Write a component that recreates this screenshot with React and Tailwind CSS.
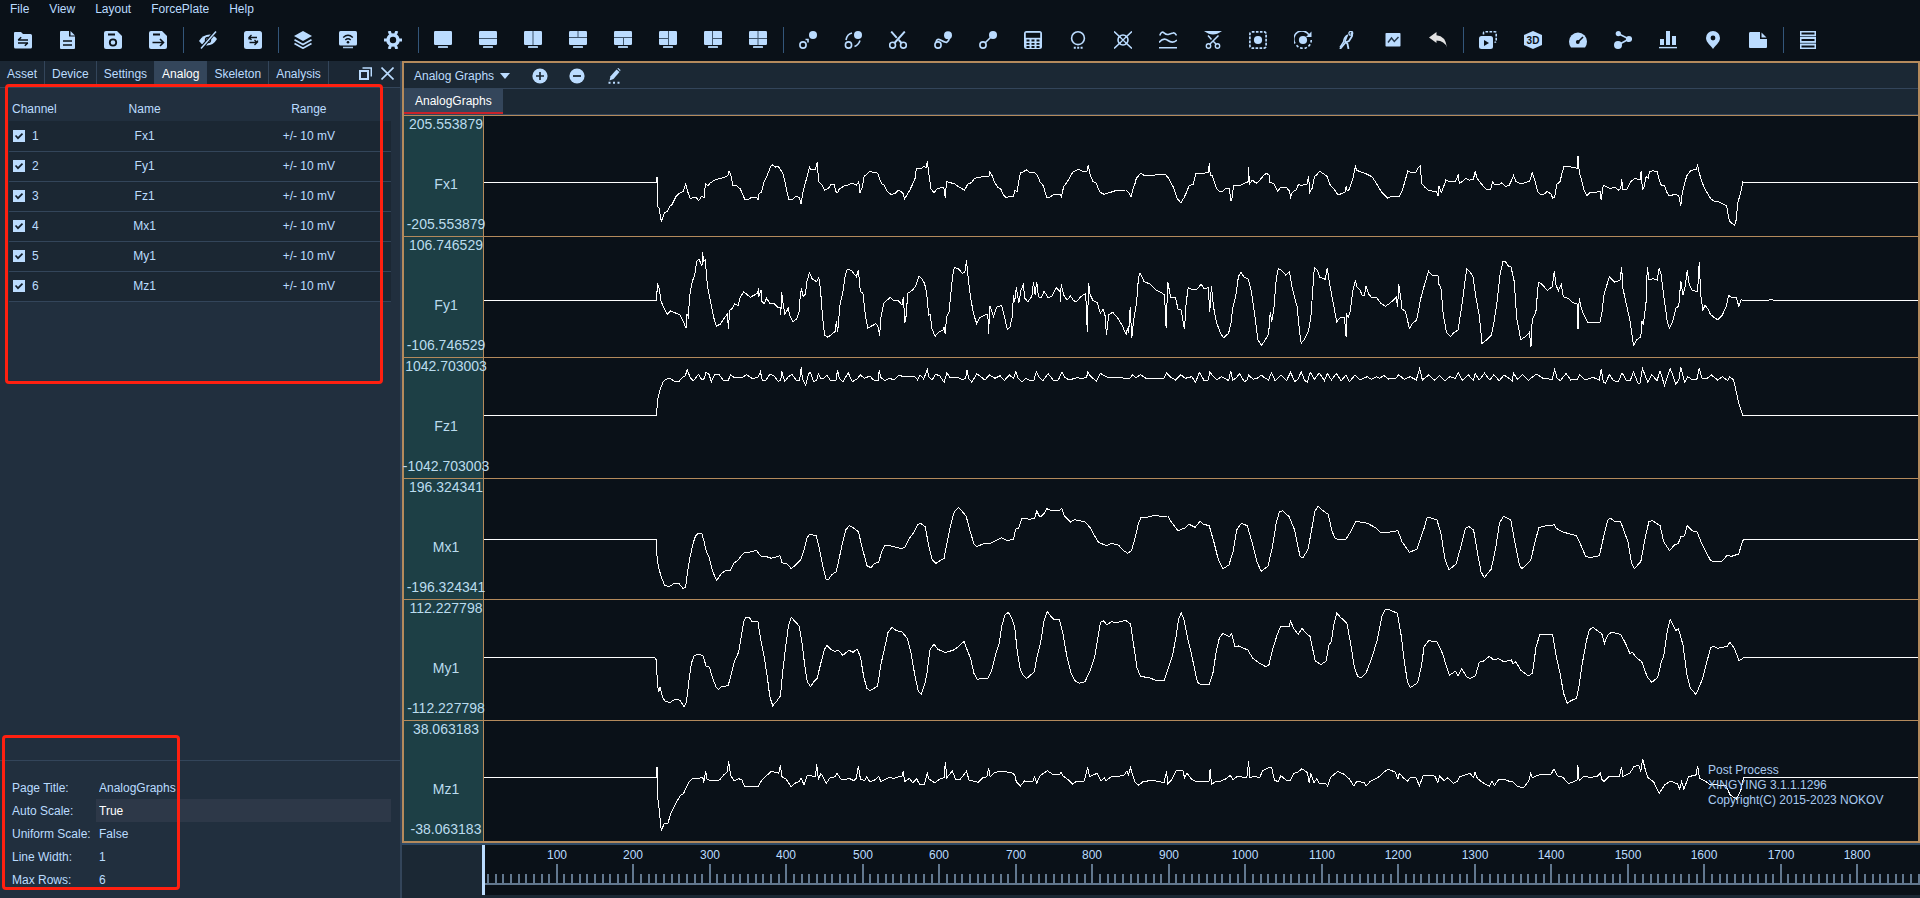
import React, { Fragment } from "react";

const INK = "#bbdcff";
const DARK = "#0a1118";

/* ---------- toolbar icons ---------- */

function Icon({ children, className = "" }) {
  return (
    <svg
      viewBox="0 0 18 18"
      className={"block h-[18px] w-[18px] shrink-0 " + className}
      fill="none"
      stroke={INK}
      strokeWidth="1.6"
      aria-hidden="true"
    >
      {children}
    </svg>
  );
}

function Screen({ d }) {
  return (
    <Icon>
      <rect x="0" y="0" width="18" height="14" rx="1.2" fill={INK} stroke="none" />
      {d && <path d={d} stroke="#3f556c" strokeWidth="1" />}
      <rect x="4" y="15" width="10" height="2" rx="0.5" fill="#a5c4e4" stroke="none" />
    </Icon>
  );
}

const TOOL_GROUPS = [
  [
    ["Open", <Icon><path d="M0 2Q0 1 1 1h6l2 2h7.5q1.500 0 1.500 1.500V16q0 1.500-1.500 1.500h-15Q0 17.500 0 16z" fill={INK} stroke="none" /><path d="M4 9h10M4.200 9l3-2.800M14 12H4M13.800 12l-3 2.800" stroke={DARK} strokeWidth="1.500" /></Icon>],
    ["Report", <Icon><path d="M1 1q0-1 1-1h8v5.500h6V17q0 1-1 1H2q-1 0-1-1z" fill={INK} stroke="none" /><path d="M11.500 0l4.500 4.500h-4.500z" fill={INK} stroke="none" /><path d="M4 10h9M4 14h9" stroke={DARK} strokeWidth="1.500" /></Icon>],
    ["Save", <Icon><path d="M0 2Q0 0 2 0h11l5 5v11q0 2-2 2H2q-2 0-2-2z" fill={INK} stroke="none" /><path d="M4 3.500h7" stroke={DARK} strokeWidth="2" /><circle cx="9" cy="11.500" r="3.200" stroke={DARK} strokeWidth="1.800" /></Icon>],
    ["Export", <Icon><path d="M0 2Q0 0 2 0h11l5 5v11q0 2-2 2H2q-2 0-2-2z" fill={INK} stroke="none" /><path d="M4 3.500h7" stroke={DARK} strokeWidth="2" /><path d="M3.500 11.500H14M11 8l3.500 3.500L11 15" stroke={DARK} strokeWidth="1.600" /></Icon>],
  ],
  [
    ["Hide", <Icon><path d="M0 10Q4 3 12 3.500L5.500 14.500Q2 13 0 10z" fill={INK} stroke="none" /><path d="M18 8Q14 15 7 14.500L14 4.500Q17 6 18 8z" fill={INK} stroke="none" /><circle cx="9" cy="9" r="2.600" stroke={DARK} strokeWidth="1.200" /><path d="M17 0L2 17.500" stroke={DARK} strokeWidth="3.500" /><path d="M17 .5L2 17.500" strokeWidth="1.500" /></Icon>],
    ["Swap", <Icon><rect width="18" height="18" rx="2.500" fill={INK} stroke="none" /><path d="M7.500 4L5 6.500l2.500 2.500M5 6.500h8M5 8.500V6.500M10.500 9l2.500 2.500L10.500 14M13 11.500H5.500M13.500 11.500V9.500" stroke={DARK} strokeWidth="1.300" /></Icon>],
  ],
  [
    ["Layers", <Icon><path d="M9 0l9 5-9 5-9-5z" fill={INK} stroke="none" /><path d="M.5 8.800L9 13.500l8.500-4.700M.5 12.500L9 17.200l8.500-4.700" strokeWidth="1.700" /></Icon>],
    ["Stream", <Icon><rect width="18" height="14.500" rx="1.500" fill={INK} stroke="none" /><path d="M4.200 6.500q4.800-4.500 9.600 0M6.300 9q2.700-2.500 5.400 0" stroke={DARK} strokeWidth="1.400" /><circle cx="9" cy="11.200" r="1.300" fill={DARK} stroke="none" /><path d="M4 16.500h10" strokeWidth="1.500" stroke="#a5c4e4" /></Icon>],
    ["Preferences", <Icon><circle cx="9" cy="9" r="5" strokeWidth="3.600" /><path d="M5.200 0L6.500 3.500M12.800 0L11.500 3.500M5.200 18L6.500 14.500M12.800 18l-1.300-3.500M0 9h3M15 9h3" strokeWidth="3" /><circle cx="9" cy="9" r="2.200" fill={DARK} stroke="none" /></Icon>],
  ],
  [
    ["Single view", <Screen />],
    ["Two rows", <Screen d="M0 7.500h18" />],
    ["Two columns", <Screen d="M9 0v14" />],
    ["Split top", <Screen d="M0 6.500h18M9 0v6.500" />],
    ["Split bottom", <Screen d="M0 6.500h18M9.500 6.500V14" />],
    ["Split left", <Screen d="M9.500 0v14M0 7.500h9" />],
    ["Split right", <Screen d="M8.500 0v14M8.500 7.500H18" />],
    ["Four views", <Screen d="M9 0v14M0 7.500h18" />],
  ],
  [
    ["Link", <Icon><circle cx="4" cy="14" r="3.100" /><circle cx="14" cy="4" r="4" fill={INK} stroke="none" /><path d="M6.500 8.500H9V11.500" /></Icon>],
    ["Exchange", <Icon><circle cx="4.500" cy="14" r="3.100" /><circle cx="14" cy="4" r="4" fill={INK} stroke="none" /><path d="M2 9Q3 3 8 2" /><path d="M10.500 15.500Q14.500 14 16 9.500" /></Icon>],
    ["Cut", <Icon><circle cx="3.600" cy="14.200" r="2.900" /><circle cx="14.400" cy="14.200" r="2.900" /><path d="M5.500 12L15.800 .5M12.500 12L9.800 9M7.800 6.800L2.200 .5" strokeWidth="1.900" /></Icon>],
    ["Smooth", <Icon><circle cx="4" cy="14" r="3.100" /><circle cx="14" cy="4.200" r="4" fill={INK} stroke="none" /><path d="M2 11Q3 7 6.500 9T12.500 11.500Q15 10 15.500 7" /></Icon>],
    ["Connect", <Icon><circle cx="4" cy="14" r="3.100" /><circle cx="14" cy="4" r="4" fill={INK} stroke="none" /><path d="M6 12L12 6" /></Icon>],
    ["Calculate", <Icon><rect width="18" height="18" rx="2.500" fill={INK} stroke="none" /><rect x="1.800" y="1.800" width="14.400" height="5" fill={DARK} stroke="none" /><path d="M2.500 9.500h3M7.500 9.500h3M12.500 9.500h3M2.500 12.800h3M7.500 12.800h3M12.500 12.800h3M2.500 16h3M7.500 16h3M12.500 16h3" stroke={DARK} strokeWidth="1.800" /></Icon>],
    ["Unlabelled", <Icon><circle cx="9" cy="7.200" r="6.400" /><path d="M4.800 16.800h2M8.200 16.800h2M11.600 16.800h2" strokeWidth="2" /></Icon>],
    ["Delete marker", <Icon><circle cx="9" cy="9" r="5" /><path d="M0 .5L6.500 6.500M18 .5L11.500 6.500M0 17.500L6.500 11.500M18 17.500L11.500 11.500" strokeWidth="1.600" /><path d="M5.500 5.500l7 7M12.500 5.500l-7 7" strokeWidth="1.300" /></Icon>],
    ["Filter", <Icon><path d="M.8 4.500Q2.500-.5 5 1.800T10 3.200T14 2Q16 1.500 17.500 4.500M0 11.500Q4.500 6 9 9.500T18 9M0 16.800h18" /></Icon>],
    ["Trim", <Icon><path d="M0 0h18Q13 3.500 9 3.500T0 0z" fill={INK} stroke="none" /><circle cx="4.500" cy="15" r="2.200" strokeWidth="1.400" /><circle cx="13.500" cy="15" r="2.200" strokeWidth="1.400" /><path d="M6 13l8.500-8.500M12 13l-3-3M7.500 8.500L4 4.500" strokeWidth="1.500" /></Icon>],
    ["Region", <Icon><rect x=".9" y=".9" width="16.200" height="16.200" rx="2" strokeDasharray="2.600 1.400" strokeWidth="1.700" /><circle cx="9" cy="9" r="4.100" fill={INK} stroke="none" /></Icon>],
    ["Rotate", <Icon><path d="M1 12.500A8.200 8.200 0 0 1 15 3.800" /><path d="M17.500 .5v5.500H12z" fill={INK} stroke="none" /><path d="M17.200 9A8.200 8.200 0 0 1 2.500 14.200" strokeDasharray="2.600 1.800" /><circle cx="9" cy="9" r="4.100" fill={INK} stroke="none" /></Icon>],
    ["Gait", <Icon><circle cx="11.800" cy="2.200" r="1.900" strokeWidth="1.300" /><path d="M12 1.500Q14 4 12.500 6L10 10l-3.500 1.500L1 18M8 4.500L6 10l2.500 3 1 5" strokeWidth="1.800" /><path d="M9 4Q5 6 4.500 11L1 16.500" strokeWidth="1.500" /></Icon>],
    ["Graph", <Icon><rect x="1.500" y="2" width="15" height="13.500" rx=".8" fill={INK} stroke="none" /><path d="M4 11.500L7.500 7l2.800 3.500L14.500 6" stroke="#22364a" strokeWidth="1.400" /></Icon>],
    ["Undo", <Icon><path d="M0 6.500L7.500 1v3.200Q16.500 4.800 18 16.500 15.500 10 7.500 9.600V12z" fill="#e2e2e2" stroke="none" /></Icon>],
  ],
  [
    ["Playback", <Icon><rect y="5" width="14" height="13" rx="2.500" fill={INK} stroke="none" /><path d="M5 9l5 3-5 3z" fill={DARK} stroke="none" /><path d="M4.500 3.500V2q0-1.200 1.200-1.200H16q1.200 0 1.200 1.200v8q0 1.200-1.700 1.200" strokeDasharray="2.600 1.400" /></Icon>],
    ["3D", <Icon><path d="M9 0l9 4v10l-9 4-9-4V4z" fill={INK} stroke="none" /><text x="9" y="13" textAnchor="middle" fill={DARK} stroke="none" fontSize="10" fontWeight="700" fontFamily="Liberation Sans, sans-serif">3D</text></Icon>],
    ["Gauge", <Icon><path d="M0 10.500a9 9 0 0 1 18 0q0 3.500-2 6H2q-2-2.500-2-6z" fill={INK} stroke="none" /><circle cx="8.800" cy="11" r="1.900" fill={DARK} stroke="none" /><path d="M9 11l5-5" stroke={DARK} strokeWidth="1.600" /></Icon>],
    ["Nodes", <Icon><path d="M4 2.500L15 8 4 14" /><circle cx="4.300" cy="2.600" r="2.600" fill={INK} stroke="none" /><circle cx="15" cy="8" r="3.100" fill={INK} stroke="none" /><circle cx="4" cy="14" r="4" fill={INK} stroke="none" /></Icon>],
    ["Bars", <Icon><path d="M1 8h4v6H1zM7 0h4v14H7zM13 5h4v9h-4z" fill={INK} stroke="none" /><path d="M0 16.600h18" strokeWidth="1.400" /></Icon>],
    ["Position", <Icon><path d="M9 0a7 7 0 0 1 7 7c0 4.500-5 7.500-7 11-2-3.500-7-6.500-7-11a7 7 0 0 1 7-7z" fill={INK} stroke="none" /><circle cx="9" cy="7" r="2.400" fill={DARK} stroke="none" /></Icon>],
    ["Note", <Icon><path d="M0 2.500Q0 1 1 1h10v7h7v8q0 1-1 1H1q-1 0-1-1z" fill={INK} stroke="none" /><path d="M12.500 1.500L17.500 6.500h-5z" fill={INK} stroke="none" /></Icon>],
  ],
  [
    ["Timeline rows", <Icon><path d="M1 0h16v18H1z" fill={INK} stroke="none" /><path d="M2.500 2.600h13M2.500 9h13M2.500 15.400h13" stroke={DARK} strokeWidth="2" /><path d="M1 5.500h16M1 12.300h16" stroke="#3f556c" strokeWidth="1" /></Icon>],
  ],
];

/* ---------- signal traces ---------- */

// Samples are kept on a fine grid: 3 units per pixel vertically, and
// `kx` units per pixel horizontally from pixel `x0` of the plot.
const CHANNELS = [
  {
    id: 1, name: "Fx1", max: "205.553879", min: "-205.553879", base: -1, zero: 202, kx: 2.45,
    left: "40,202 40,186 43,186 43,275 47,280 52,320 60,293 66,290 74,272 78,270 88,245 96,235 106,229 112,208 117,231 123,250 137,247 144,257 150,245 158,247 160,205 166,212 172,204 182,196 195,190 205,188 215,182 218,167 222,178 228,213 237,212 246,222 257,254 268,252 274,246 286,246 289,255 292,235 298,232 303,204 310,187 320,155 324,149 332,156 339,155 350,175 355,200 364,252 375,252 382,244 390,247 395,268 398,240 404,208 411,178 415,156 420,165 430,163 434,142 438,200 445,208 452,225 462,220 468,208 476,208 480,230 484,233 488,222 500,213 510,210 520,204 530,210 536,200 539,233 545,215 549,184 557,177 562,169 572,172 580,174 584,178 586,190 592,206 598,210 606,230 616,239 625,235 632,226 638,228 645,236 648,252 654,240 660,228 667,210 674,190 677,161 688,162 695,155 701,157 704,139 709,190 713,222 720,233 728,222 738,218 744,216 748,250 751,200 760,203 770,206 778,213 795,226 803,207 812,203 820,190 835,186 855,184 857,172 862,180 868,200 876,217 884,222 890,240 896,247 915,244 919,225 924,230 928,200 932,173 940,170 946,164 953,171 966,172 974,182 980,200 988,212 996,246 1005,246 1012,239 1030,238 1032,246 1038,215 1044,205 1052,190 1060,172 1075,163 1085,169 1096,168 1098,151 1103,180 1110,200 1117,203 1127,232 1137,238 1150,233 1165,227 1190,225 1198,233 1203,246 1207,224 1213,205 1216,190 1227,175 1235,181 1288,179 1295,190 1308,220 1316,250 1325,263 1332,250 1340,230 1345,212 1355,208 1362,176",
    right: "10,175 20,172 23,145 25,180 30,180 36,205 41,222 48,230 55,230 62,222 72,220 75,256 78,256 82,212 100,210 112,203 118,200 119,157 121,207 128,195 138,205 147,195 155,182 163,175 169,180 171,203 180,205 190,229 197,218 212,218 219,228 222,246 226,232 235,225 241,209 250,211 262,208 266,184 269,232 275,220 281,183 286,180 293,169 304,178 311,184 318,208 330,225 338,240 355,232 358,214 361,228 366,222 374,192 381,154 384,166 395,171 410,178 422,186 432,205 445,232 460,250 468,245 487,246 495,228 502,200 509,167 515,172 529,171 534,158 540,152 543,205 552,218 560,226 580,231 583,244 585,213 591,233 600,205 602,194 612,200 626,200 633,178 635,205 642,200 652,190 660,196 670,192 674,169 679,190 690,208 702,223 712,223 717,200 721,208 730,210 740,203 748,214 757,212 764,195 768,181 774,200 787,207 800,202 808,198 814,172 820,195 827,230 835,239 845,236 851,229 860,237 864,250 869,246 874,208 882,200 888,170 892,153 905,155 924,160 926,124 929,170 936,200 941,225 948,242 955,233 970,232 980,228 983,256 988,211 997,216 1005,221 1015,216 1025,225 1031,220 1033,193 1036,222 1046,222 1055,200 1066,190 1078,195 1081,168 1084,226 1088,215 1093,185 1098,190 1099,180 1102,170 1110,167 1120,170 1124,190 1130,210 1138,212 1143,230 1150,243 1163,238 1173,242 1178,274 1181,240 1187,205 1193,182 1203,166 1216,163 1219,151 1224,178 1232,208 1240,228 1252,252 1262,261 1270,260 1290,272 1297,318 1309,331 1313,320 1318,262 1325,230 1330,200 1332,202",
  },
  {
    id: 2, name: "Fy1", max: "106.746529", min: "-106.746529", base: -122, zero: 556, kx: 2.45,
    left: "40,556 43,508 46,515 52,560 60,583 67,598 75,587 85,593 98,600 105,617 113,640 115,597 118,605 122,540 128,500 134,480 139,440 144,432 152,452 153,412 156,438 160,434 165,510 172,555 180,605 187,634 197,627 205,612 214,598 217,643 219,587 226,580 232,567 240,572 246,545 254,531 262,538 270,547 288,535 290,520 291,545 297,525 299,560 305,566 310,550 318,565 328,565 338,577 343,576 345,600 347,532 351,570 355,598 363,580 368,605 374,620 384,612 390,590 393,535 396,524 400,545 405,538 409,500 415,473 422,492 433,500 438,487 442,520 447,600 452,660 460,667 470,658 479,648 481,617 484,652 490,570 497,530 503,480 508,463 518,466 530,485 535,466 540,530 546,535 552,600 558,640 566,634 578,626 584,637 587,664 590,610 597,565 606,555 613,547 620,556 632,556 642,570 645,547 649,620 651,617 656,535 666,527 675,515 683,484 690,490 697,505 702,530 707,600 711,598 715,640 723,664 732,652 743,645 745,635 748,658 751,605 757,590 762,530 766,480 770,458 780,461 790,475 796,472 800,436 804,490 810,550 818,600 825,626 832,608 845,600 852,597 854,658 857,572 862,590 866,605 874,577 886,571 892,600 900,643 906,638 912,605 915,540 918,560 922,517 928,563 934,523 939,510 943,550 950,560 960,545 964,502 968,540 972,500 976,545 983,548 990,529 1000,548 1010,543 1020,518 1030,530 1030,562 1032,508 1038,540 1046,555 1055,543 1062,557 1070,560 1080,545 1092,535 1096,650 1099,505 1103,540 1110,557 1120,562 1128,595 1134,583 1139,597 1143,660 1148,600 1158,592 1170,608 1182,633 1191,658 1194,640 1197,655 1201,575 1205,668 1210,610 1217,560 1221,490 1225,473 1235,500 1250,507 1262,523 1280,535 1285,540 1289,638 1293,500 1300,547 1312,547 1318,583 1326,585 1334,643 1338,565 1343,518 1355,525 1365,522",
    right: "3,508 10,522 20,518 24,590 28,513 33,575 40,620 50,655 58,668 70,655 76,625 80,580 88,540 94,485 100,472 108,487 118,492 126,530 134,600 142,675 151,691 158,678 168,658 172,592 176,620 181,580 187,490 192,460 200,467 210,480 219,470 226,520 238,575 244,650 248,685 256,673 266,648 272,600 280,458 288,467 293,487 307,493 312,458 318,510 328,575 335,620 345,607 354,607 358,667 360,600 363,607 368,590 374,530 381,496 384,515 392,525 398,542 403,540 407,512 413,537 420,547 433,548 443,565 454,574 466,564 481,547 484,577 487,508 493,560 495,582 503,588 513,640 521,625 531,615 541,550 551,505 560,469 569,481 583,482 585,508 590,515 596,600 604,652 614,664 623,652 632,645 638,600 645,540 650,490 654,462 662,472 669,486 675,540 684,600 691,685 700,677 714,660 719,630 728,560 735,480 742,440 748,439 754,452 762,456 770,500 776,610 786,674 797,665 807,652 811,695 814,615 823,590 829,502 838,508 851,526 863,515 868,468 872,510 878,527 885,508 890,545 902,550 912,562 924,567 926,643 929,550 934,580 940,598 950,622 980,621 985,590 990,538 997,510 1003,485 1016,502 1029,495 1033,455 1036,520 1045,570 1054,620 1062,691 1070,675 1080,665 1083,617 1086,630 1093,560 1096,455 1100,495 1110,491 1120,495 1125,458 1130,480 1137,550 1145,620 1150,640 1158,620 1166,580 1173,572 1178,497 1183,540 1188,520 1194,466 1198,505 1205,525 1213,528 1219,530 1223,442 1227,540 1232,587 1237,570 1245,583 1250,597 1260,608 1268,614 1280,600 1290,572 1295,541 1302,547 1314,547 1320,574 1326,554 1329,556 1394,556 1396,553 1402,553 1404,556",
  },
  {
    id: 3, name: "Fz1", max: "1042.703003", min: "-1042.703003", base: -243, zero: 901, kx: 2.45,
    left: "40,901 44,850 50,820 57,800 63,793 74,790 84,799 96,799 104,787 111,782 116,764 123,788 130,797 136,790 143,778 152,795 158,790 161,773 168,775 175,800 183,778 193,777 204,796 216,796 222,780 233,789 249,788 262,779 276,792 290,785 295,770 300,797 308,796 318,778 328,782 338,799 345,795 347,769 355,799 362,787 372,778 384,797 391,795 395,757 398,793 406,810 413,775 418,773 425,799 433,797 437,776 444,792 450,790 458,780 466,795 480,797 484,764 488,790 497,800 510,773 520,800 532,792 540,780 550,790 563,783 572,795 584,796 586,765 590,787 600,797 612,790 622,795 634,780 645,785 660,783 672,783 680,795 686,780 695,792 704,764 708,785 716,795 724,778 734,782 745,802 752,773 760,788 780,788 790,795 798,790 801,764 805,790 813,802 825,776 835,785 845,795 856,780 870,790 882,782 893,796 905,780 915,790 921,769 926,790 936,800 945,790 955,796 965,795 971,771 977,785 987,797 1000,776 1013,796 1025,795 1034,770 1040,787 1052,795 1070,788 1080,790 1094,788 1097,772 1103,782 1118,799 1128,775 1145,787 1200,790 1207,779 1215,788 1226,779 1240,790 1283,790 1290,774 1300,787 1312,795 1325,779 1336,790 1352,785 1361,802 1370,774",
    right: "0,773 10,797 20,795 24,772 32,783 42,795 52,785 60,790 70,797 75,767 80,795 88,790 97,776 108,799 115,797 119,780 130,793 140,790 150,780 160,790 168,795 175,773 184,797 198,780 212,797 222,772 232,800 240,792 248,771 257,797 263,802 270,771 280,793 292,774 305,797 312,775 322,795 334,775 346,797 358,780 366,800 380,780 392,795 410,785 420,793 432,785 440,790 450,781 462,792 480,790 487,779 500,793 515,785 530,795 538,761 545,795 560,780 575,796 587,781 600,797 612,785 625,790 633,773 643,796 657,779 670,797 674,775 684,795 697,775 710,795 720,779 733,797 745,780 765,797 768,775 778,793 790,779 805,797 812,788 825,777 840,790 863,793 869,764 875,790 883,797 897,775 908,795 925,793 930,779 943,795 962,787 978,795 983,762 988,800 993,805 1003,779 1013,797 1025,800 1034,773 1045,797 1054,797 1062,771 1073,805 1078,805 1084,760 1097,802 1107,779 1120,797 1127,767 1138,811 1152,760 1166,808 1173,795 1178,757 1187,802 1195,785 1205,793 1217,795 1223,760 1230,790 1240,792 1253,780 1268,795 1280,785 1293,797 1298,785 1307,795 1312,820 1320,865 1330,901",
  },
  {
    id: 4, name: "Mx1", max: "196.324341", min: "-196.324341", base: 1, zero: 178, kx: 2.178,
    left: "40,178 42,235 46,265 52,290 60,315 72,320 82,311 96,311 106,326 112,320 116,280 122,235 130,190 136,168 144,159 152,161 158,190 162,212 170,235 178,275 188,301 200,280 210,271 220,273 230,250 240,240 254,219 270,216 285,211 296,228 310,230 322,235 343,227 348,248 360,252 371,266 384,252 395,237 403,205 410,172 416,163 432,167 440,210 448,260 456,298 462,298 470,284 481,275 488,235 496,190 504,150 513,137 524,145 535,155 544,200 556,257 566,263 575,250 585,246 592,215 600,197 615,198 640,206 650,200 660,175 672,155 680,135 687,130 699,140 706,190 716,240 725,250 745,235 752,190 760,140 770,95 780,82 790,95 799,108 808,150 818,192 825,200 840,192 858,190 880,177 886,173 900,182 915,178 920,148 928,144 936,115 955,118 967,115 972,93 980,112 990,100 997,86 1010,93 1030,90 1033,85 1040,108 1055,126 1065,119 1090,125 1104,145 1115,170 1123,187 1143,197 1155,190 1172,195 1185,212 1195,220 1204,212 1214,170 1220,135 1227,113 1245,111 1260,106 1275,109 1293,108 1303,128 1318,152 1335,144 1345,133 1360,142",
    right: "0,124 8,133 20,137 30,185 40,240 50,266 63,255 72,215 80,150 90,130 103,137 112,180 124,245 133,274 148,258 158,200 166,130 173,95 180,92 194,110 206,150 212,190 218,230 224,233 235,210 243,150 250,95 257,79 268,92 279,103 288,155 294,175 300,178 318,178 328,155 340,124 365,130 382,143 394,159 420,155 431,152 440,185 456,217 473,207 480,175 488,145 494,114 502,113 516,120 524,155 534,240 542,269 558,252 568,200 578,145 586,140 596,150 604,215 612,275 619,293 634,268 644,205 652,130 661,109 677,119 686,190 696,257 701,266 720,242 728,195 738,143 752,138 768,137 771,131 776,145 790,156 820,167 830,197 840,229 850,233 870,227 880,165 888,120 894,115 905,126 916,125 932,185 940,250 946,266 960,245 970,170 978,124 986,122 1002,137 1010,185 1023,212 1033,195 1042,190 1047,170 1055,168 1061,137 1072,152 1083,156 1092,188 1112,242 1118,244 1137,244 1148,226 1158,229 1173,222 1182,182 1186,178",
  },
  {
    id: 5, name: "My1", max: "112.227798", min: "-112.227798", base: -120, zero: 532, kx: 2.178,
    left: "36,532 40,540 43,620 46,635 49,622 55,650 62,665 74,667 86,658 98,661 108,680 114,665 120,600 126,550 132,528 144,522 154,527 162,558 170,562 178,595 186,620 192,628 200,620 216,617 224,580 232,542 242,515 248,470 254,425 260,412 268,413 275,425 289,426 296,480 304,530 312,590 318,650 325,677 334,665 344,648 350,570 358,490 364,435 371,412 378,422 390,438 397,490 404,560 410,605 418,620 426,605 434,595 444,545 452,508 458,496 468,508 478,515 485,510 497,526 512,511 522,517 532,507 540,530 548,590 556,625 564,632 582,618 590,555 600,500 608,455 618,442 628,452 642,456 655,475 664,520 674,590 682,635 689,643 698,610 704,575 710,510 720,493 730,508 748,518 768,510 780,500 794,484 800,505 810,535 818,580 826,598 845,594 852,595 862,570 872,520 880,490 886,440 894,405 902,397 910,412 918,440 924,510 932,570 940,588 947,596 966,575 972,535 982,485 990,420 998,395 1006,408 1014,418 1027,418 1036,460 1046,530 1056,580 1066,602 1076,610 1090,605 1102,575 1114,530 1122,470 1128,427 1135,422 1144,434 1155,425 1168,428 1190,421 1202,432 1210,500 1218,565 1227,590 1245,592 1264,601 1284,601 1294,565 1304,530 1312,480 1320,415 1326,399 1332,415 1340,465 1350,515 1360,575 1366,607",
    right: "0,612 20,612 28,580 36,510 42,475 50,460 64,470 69,460 76,500 84,498 104,510 115,535 130,550 143,560 150,555 158,510 168,465 176,438 195,438 197,422 204,445 214,464 222,444 230,458 240,470 246,510 251,542 263,554 275,543 280,497 286,485 292,430 298,400 306,412 320,430 328,490 336,560 343,588 350,594 362,578 374,535 386,480 396,410 403,389 414,390 430,400 438,465 446,555 452,605 458,623 474,608 482,560 488,500 498,482 516,485 528,520 536,555 543,586 557,573 562,587 570,565 580,590 588,596 600,587 608,547 618,543 630,529 640,540 650,536 662,545 678,540 682,552 688,545 698,570 715,588 724,580 732,500 740,464 768,463 776,530 784,580 792,640 800,670 808,662 820,655 826,615 832,555 842,480 848,450 856,442 870,457 875,460 881,490 888,465 896,457 916,463 926,488 936,520 942,517 950,532 962,545 974,590 984,607 997,592 1005,545 1010,530 1018,450 1024,418 1036,452 1042,446 1052,495 1060,580 1068,625 1080,643 1086,625 1095,595 1104,545 1112,503 1118,498 1128,505 1148,499 1154,487 1164,505 1174,542 1186,532",
  },
  {
    id: 6, name: "Mz1", max: "38.063183", min: "-38.063183", base: -241, zero: 892, kx: 2.178,
    left: "40,892 41,862 43,862 43,950 47,990 52,1051 60,1030 68,1030 76,1000 88,970 98,948 107,940 112,925 120,907 128,896 154,893 156,910 161,874 164,897 172,902 195,900 205,885 214,875 217,844 222,885 230,902 242,896 250,900 256,920 275,918 290,918 300,898 312,885 322,874 340,880 344,856 348,890 358,897 370,920 382,908 390,905 395,895 402,915 410,885 430,890 433,853 437,900 443,880 447,888 456,910 466,893 478,890 483,880 492,897 502,900 512,895 524,902 530,895 535,858 540,897 550,902 555,890 563,905 575,900 585,888 590,905 610,893 622,895 642,888 645,872 648,905 660,895 668,908 678,897 686,915 697,912 704,880 708,897 722,908 735,897 745,893 748,847 752,893 765,873 773,897 785,897 800,874 806,900 828,907 840,893 850,890 854,865 858,890 870,877 890,874 912,879 918,885 922,905 932,918 942,903 962,905 967,890 972,910 980,887 998,872 1010,882 1028,885 1032,877 1036,887 1050,900 1060,912 1070,903 1088,903 1097,862 1101,890 1120,880 1130,903 1138,893 1142,902 1155,890 1185,887 1193,873 1197,885 1202,862 1206,880 1212,905 1222,916 1232,905 1255,901 1284,908 1290,874 1293,912 1302,900 1314,872 1330,872 1334,893 1340,880 1352,898 1362,904",
    right: "0,903 15,904 20,903 22,866 25,913 35,904 45,903 55,898 66,886 72,900 80,890 102,892 106,844 108,893 118,889 130,893 136,873 150,862 156,862 162,900 170,905 176,887 190,903 196,902 204,880 212,878 222,866 234,878 238,910 241,880 248,908 254,897 260,910 274,911 278,918 284,893 300,874 314,883 326,898 335,918 342,903 358,908 362,918 370,905 390,890 402,875 410,868 425,876 431,897 434,880 444,895 452,903 458,893 470,893 478,917 486,887 505,885 512,890 518,907 522,888 532,902 540,893 552,910 560,905 566,890 588,880 596,893 599,877 604,895 616,908 630,918 636,903 641,917 650,900 660,897 672,903 680,903 692,920 705,923 716,903 720,880 724,893 738,885 764,884 771,866 778,887 790,892 803,911 822,900 823,856 826,903 836,888 850,893 866,888 872,880 875,898 880,905 890,890 914,888 918,860 921,890 936,880 945,860 956,856 960,875 964,836 970,870 976,893 988,905 1000,940 1012,915 1024,903 1040,912 1045,928 1049,905 1054,928 1064,890 1080,885 1084,857 1088,895 1100,903 1110,913 1145,917 1155,945 1168,957 1178,930 1184,892",
  },
];

function tracePoints({ left, right, base, zero, kx }) {
  const place = (pts, x0, k) =>
    pts.split(" ").map((p) => {
      const [x, y] = p.split(",").map(Number);
      return `${(x0 + x / k).toFixed(1)},${(y / 3 + base).toFixed(1)}`;
    });
  const y0 = (zero / 3 + base).toFixed(1);
  return [`0,${y0}`, ...place(left, 156, 2.45), ...place(right, 716, kx), `4000,${y0}`].join(" ");
}

function ChannelRow({ channel, children }) {
  return (
    <section className="relative flex border-t border-[#b48a5c]" aria-label={channel.name}>
      <div className="relative z-10 flex h-[120px] w-[79px] shrink-0 flex-col items-center bg-[#1d3f45] pb-1 pl-[5px] text-[14px] leading-4 whitespace-nowrap text-[#bbdcee]">
        <span>{channel.max}</span>
        <span className="mt-auto">{channel.name}</span>
        <span className="mt-6">{channel.min}</span>
      </div>
      <svg className="block h-[120px] min-w-0 flex-1 border-l border-[#b48a5c]" role="img" aria-label={channel.name + " signal"}>
        <polyline points={tracePoints(channel)} fill="none" stroke="#fff" strokeWidth="1" shapeRendering="crispEdges" />
      </svg>
      {children}
    </section>
  );
}

/* ---------- timeline ---------- */

const frameX = (f) => Math.round(f * 0.765 - 4.7);

function Timeline() {
  const ticks = Array.from({ length: 188 }, (_, i) => (i + 1) * 10);
  return (
    <div className="flex border-t-2 border-[#2f4a66] bg-[#1b2834] pb-[3px]">
      <div className="w-[80px] shrink-0" />
      <div className="h-[50px] w-[3px] shrink-0 bg-[#bbdcff]" />
      <svg className="block h-[50px] min-w-0 flex-1 bg-[#0a1118]" role="img" aria-label="Frames">
        <g fill="#62788f" shapeRendering="crispEdges">
          {ticks.map((f) => (
            <rect key={f} x={frameX(f) - 1} y={f % 100 ? 29 : 19} width="2" height={f % 100 ? 9 : 19} />
          ))}
          <rect x="0" y="38" width="4000" height="2" />
        </g>
        <g fill={INK} fontSize="12" textAnchor="middle">
          {ticks.filter((f) => f % 100 === 0).map((f) => (
            <text key={f} x={frameX(f)} y="14">{f}</text>
          ))}
        </g>
      </svg>
    </div>
  );
}

/* ---------- side panel ---------- */

const TABS = ["Asset", "Device", "Settings", "Analog", "Skeleton", "Analysis"];

function ChannelTable() {
  return (
    <div className="px-[9px] pt-[9px]">
      <table className="w-full table-fixed border-collapse text-center">
        <colgroup>
          <col className="w-[14%]" />
          <col className="w-[43%]" />
          <col className="w-[43%]" />
        </colgroup>
        <thead>
          <tr className="h-6">
            <th className="p-0 pl-[3px] text-left font-normal">Channel</th>
            <th className="p-0 font-normal">Name</th>
            <th className="p-0 font-normal">Range</th>
          </tr>
        </thead>
        <tbody className="bg-[#1b2733]">
          {CHANNELS.map((c) => (
            <tr key={c.id} className="h-[30px] border-b border-[#33455a]">
              <td className="p-0 pl-1">
                <label className="flex items-center gap-[7px]">
                  <span className="relative block h-3 w-3">
                    <input type="checkbox" defaultChecked className="peer block h-3 w-3 appearance-none bg-[#bbdcff]" />
                    <svg viewBox="0 0 12 12" className="pointer-events-none absolute inset-0 hidden h-3 w-3 peer-checked:block">
                      <path d="M2.500 5.500L5 8.200 9.500 3.700" fill="none" stroke="#14202c" strokeWidth="1.700" />
                    </svg>
                  </span>
                  {c.id}
                </label>
              </td>
              <td className="p-0">{c.name}</td>
              <td className="p-0">+/- 10 mV</td>
            </tr>
          ))}
        </tbody>
      </table>
    </div>
  );
}

function PropertyRow({ id, label, children }) {
  return (
    <div className="flex h-[23px] items-stretch pr-[9px] pl-3">
      <label htmlFor={id} className="flex w-[84px] shrink-0 items-center whitespace-nowrap">{label}</label>
      {children}
    </div>
  );
}

const FIELD = "h-[23px] min-w-0 flex-1 appearance-none bg-transparent px-[3px] outline-none";

function SidePanel() {
  return (
    <aside className="relative flex w-[400px] shrink-0 flex-col bg-[#212f3e]">
      <div className="flex h-[27px] shrink-0 border-b border-[#33455a] bg-[#1b2734]" role="tablist">
        {TABS.map((t) => (
          <button
            key={t}
            role="tab"
            aria-selected={t === "Analog"}
            className={
              "h-[25px] border-r border-[#33455a] px-[7px] " +
              (t === "Analog" ? "bg-[#34465b] text-white" : "")
            }
          >
            {t}
          </button>
        ))}
        <div className="ml-auto flex items-center gap-[9px] pr-[6px] pb-[1px]">
          <button aria-label="Float panel">
            <svg viewBox="0 0 13 13" className="block h-[13px] w-[13px]" fill="none" stroke={INK} strokeWidth="1.500">
              <rect x="1" y="4" width="8" height="8" strokeWidth="2" />
              <path d="M3.500 1h8.800v8.500" />
            </svg>
          </button>
          <button aria-label="Close panel">
            <svg viewBox="0 0 13 13" className="block h-[13px] w-[13px]" fill="none" stroke={INK} strokeWidth="1.600">
              <path d="M.5 .5l12 12M12.500 .5l-12 12" />
            </svg>
          </button>
        </div>
      </div>
      <ChannelTable />
      <div className="mt-auto border-t border-[#33455a] pt-[15px] pb-[7px]">
        <PropertyRow id="page-title" label="Page Title:">
          <input id="page-title" type="text" defaultValue="AnalogGraphs" className={FIELD} />
        </PropertyRow>
        <PropertyRow id="auto-scale" label="Auto Scale:">
          <select id="auto-scale" defaultValue="True" className="h-[23px] min-w-0 flex-1 appearance-none bg-[#2d3848] px-[3px] text-white outline-none">
            <option>True</option>
            <option>False</option>
          </select>
        </PropertyRow>
        <PropertyRow id="uniform-scale" label="Uniform Scale:">
          <select id="uniform-scale" defaultValue="False" className={FIELD}>
            <option>True</option>
            <option>False</option>
          </select>
        </PropertyRow>
        <PropertyRow id="line-width" label="Line Width:">
          <input id="line-width" type="text" defaultValue="1" className={FIELD} />
        </PropertyRow>
        <PropertyRow id="max-rows" label="Max Rows:">
          <input id="max-rows" type="text" defaultValue="6" className={FIELD} />
        </PropertyRow>
      </div>
      <div className="pointer-events-none absolute top-[23px] right-[17px] left-[5px] z-20 h-[300px] rounded-[4px] border-[3px] border-[#ff2010]" />
      <div className="pointer-events-none absolute bottom-2 left-[2px] z-20 h-[155px] w-[178px] rounded-[4px] border-[3px] border-[#ff2010]" />
    </aside>
  );
}

/* ---------- graph view ---------- */

function GraphView() {
  return (
    <div className="border-2 border-[#b48a5c] bg-[#0a1118]">
      <div className="flex h-[26px] items-center border-b border-[#33455a] bg-[#1b2834] pl-[10px]">
        <button className="flex items-center gap-[6px]">
          Analog Graphs
          <svg viewBox="0 0 10 6" className="block h-[6px] w-[10px]" fill={INK}><path d="M0 0h10L5 6z" /></svg>
        </button>
        <div className="ml-[22px] flex items-center gap-[21px]">
          <button aria-label="Add page">
            <svg viewBox="0 0 16 16" className="block h-4 w-4" fill={INK}>
              <circle cx="8" cy="8" r="7.600" />
              <path d="M8 4v8M4 8h8" stroke="#1b2834" strokeWidth="1.700" />
            </svg>
          </button>
          <button aria-label="Remove page">
            <svg viewBox="0 0 16 16" className="block h-4 w-4" fill={INK}>
              <circle cx="8" cy="8" r="7.600" />
              <path d="M4 8h8" stroke="#1b2834" strokeWidth="1.800" />
            </svg>
          </button>
          <button aria-label="Rename page">
            <svg viewBox="0 0 16 16" className="block h-4 w-4" fill={INK}>
              <path d="M10.500 1.500l3 2.500-6 7-4 1.500 1-4.200z" />
              <path d="M11.300 .5l1-.5 2.200 2-.4 1.200z" />
              <path d="M2.500 14.800h2M7 14.800h2M11.500 14.800h2" stroke={INK} strokeWidth="2" />
            </svg>
          </button>
        </div>
      </div>
      <div className="flex h-[26px] border-b border-[#33455a] bg-[#1b2834]" role="tablist">
        <button role="tab" aria-selected="true" className="h-[25px] border-b-2 border-[#c8222a] bg-[#34465b] px-[11px] text-white">
          AnalogGraphs
        </button>
      </div>
      {CHANNELS.map((c, i) => (
        <ChannelRow key={c.id} channel={c}>
          {i === CHANNELS.length - 1 && (
            <div className="absolute right-0 bottom-[33px] w-[210px] leading-[15px] text-[#a9cbf0]">
              <p>Post Process</p>
              <p>XINGYING 3.1.1.1296</p>
              <p>Copyright(C) 2015-2023 NOKOV</p>
            </div>
          )}
        </ChannelRow>
      ))}
    </div>
  );
}

export default function App() {
  return (
    <div className="flex min-h-screen flex-col bg-[#0a1118] font-['Liberation_Sans',Arial,sans-serif] text-[12px] leading-4 text-[#bbdcff]">
      <nav className="flex h-[18px] items-center gap-5 px-[10px]">
        {["File", "View", "Layout", "ForcePlate", "Help"].map((m) => (
          <button key={m}>{m}</button>
        ))}
      </nav>
      <div className="flex h-[43px] items-center px-[14px] pt-px" role="toolbar">
        {TOOL_GROUPS.map((group, i) => (
          <Fragment key={i}>
            {i > 0 && <div className="mr-[15px] ml-4 h-[26px] w-px shrink-0 bg-[#33567a]" />}
            <div className="flex gap-[27px]">
              {group.map(([label, icon]) => (
                <button key={label} aria-label={label} title={label}>{icon}</button>
              ))}
            </div>
          </Fragment>
        ))}
      </div>
      <div className="flex flex-1">
        <SidePanel />
        <main className="flex min-w-0 flex-1 flex-col border-l-2 border-[#33455a] bg-[#1b2834]">
          <GraphView />
          <Timeline />
        </main>
      </div>
    </div>
  );
}
